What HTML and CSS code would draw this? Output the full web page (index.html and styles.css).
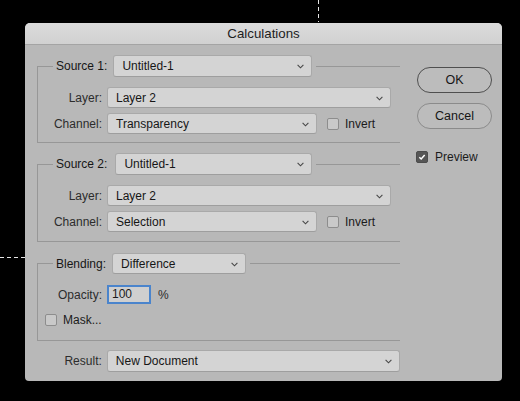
FILE: index.html
```html
<!DOCTYPE html>
<html>
<head>
<meta charset="utf-8">
<link rel="stylesheet" href="styles.css">
</head>
<body>
<div class="guide guide-v"></div>
<div class="guide guide-h"></div>
<div class="window">
  <div class="titlebar">Calculations</div>
  <div class="content">
    <div class="left">
      <div class="group g1">
        <div class="head">
          <span class="head-label">Source 1:</span>
          <div class="select head-select w-src1"><span>Untitled-1</span><svg class="chev" width="7" height="5" viewBox="0 0 7 5"><polyline points="0.6,0.8 3.5,3.8 6.4,0.8"/></svg></div>
        </div>
        <div class="row first">
          <span class="label">Layer:</span>
          <div class="select w-layer"><span>Layer 2</span><svg class="chev" width="7" height="5" viewBox="0 0 7 5"><polyline points="0.6,0.8 3.5,3.8 6.4,0.8"/></svg></div>
        </div>
        <div class="row">
          <span class="label">Channel:</span>
          <div class="select w-channel"><span>Transparency</span><svg class="chev" width="7" height="5" viewBox="0 0 7 5"><polyline points="0.6,0.8 3.5,3.8 6.4,0.8"/></svg></div>
          <span class="check"></span><span class="check-label">Invert</span>
        </div>
      </div>
      <div class="group g2">
        <div class="head">
          <span class="head-label">Source 2:</span>
          <div class="select head-select w-src2"><span>Untitled-1</span><svg class="chev" width="7" height="5" viewBox="0 0 7 5"><polyline points="0.6,0.8 3.5,3.8 6.4,0.8"/></svg></div>
        </div>
        <div class="row first">
          <span class="label">Layer:</span>
          <div class="select w-layer"><span>Layer 2</span><svg class="chev" width="7" height="5" viewBox="0 0 7 5"><polyline points="0.6,0.8 3.5,3.8 6.4,0.8"/></svg></div>
        </div>
        <div class="row">
          <span class="label">Channel:</span>
          <div class="select w-channel"><span>Selection</span><svg class="chev" width="7" height="5" viewBox="0 0 7 5"><polyline points="0.6,0.8 3.5,3.8 6.4,0.8"/></svg></div>
          <span class="check"></span><span class="check-label">Invert</span>
        </div>
      </div>
      <div class="group g3">
        <div class="head">
          <span class="head-label">Blending:</span>
          <div class="select head-select w-blend"><span>Difference</span><svg class="chev" width="7" height="5" viewBox="0 0 7 5"><polyline points="0.6,0.8 3.5,3.8 6.4,0.8"/></svg></div>
        </div>
        <div class="row opacity-row">
          <span class="label">Opacity:</span>
          <div class="input">100</div>
          <span class="pct">%</span>
        </div>
        <div class="mask-row">
          <span class="check"></span><span class="check-label">Mask...</span>
        </div>
      </div>
      <div class="row result-row">
        <span class="label">Result:</span>
        <div class="select w-result"><span>New Document</span><svg class="chev" width="7" height="5" viewBox="0 0 7 5"><polyline points="0.6,0.8 3.5,3.8 6.4,0.8"/></svg></div>
      </div>
    </div>
    <div class="right">
      <div class="btn btn-default">OK</div>
      <div class="btn btn-cancel">Cancel</div>
      <div class="preview">
        <span class="check checked"><svg width="12" height="12" viewBox="0 0 12 12"><polyline points="2.8,6.2 5,8.4 9.2,3.6"/></svg></span>
        <span class="check-label">Preview</span>
      </div>
    </div>
  </div>
</div>
</body>
</html>
```

FILE: styles.css
```css
html, body {
  margin: 0;
}
body {
  position: relative;
  width: 520px;
  height: 401px;
  overflow: hidden;
  background: #000;
  box-sizing: border-box;
  padding: 23px 0 0 25px;
  font-family: "Liberation Sans", Arial, sans-serif;
  font-size: 12px;
  color: #1b1b1b;
}

.guide {
  position: absolute;
}
.guide-v {
  left: 318px;
  top: 0;
  width: 1px;
  height: 22px;
  background: repeating-linear-gradient(to bottom, #e6e6e6 0 4px, transparent 4px 7px);
}
.guide-h {
  left: 0;
  top: 257px;
  width: 25px;
  height: 1px;
  background: repeating-linear-gradient(to right, #e6e6e6 0 4px, transparent 4px 7px);
}

.window {
  width: 477px;
  height: 358px;
  background: #b8b8b8;
  border-radius: 5px 5px 4px 4px;
  overflow: hidden;
  display: flex;
  flex-direction: column;
}
.titlebar {
  height: 21px;
  line-height: 22px;
  border-bottom: 1px solid #a4a4a4;
  background: linear-gradient(#dbdbdb, #d1d1d1);
  text-align: center;
  font-size: 13.3px;
  color: #1e1e1e;
}
.content {
  display: flex;
  padding: 0 10px 0 12px;
}
.left {
  width: 363px;
  display: flex;
  flex-direction: column;
}

.group {
  margin-top: 21px;
  border-left: 1px solid #979797;
  border-bottom: 1px solid #979797;
  padding-bottom: 8px;
}
.g2 {
  margin-top: 21px;
  padding-bottom: 9px;
}
.g3 {
  margin-top: 21px;
  padding-bottom: 14px;
}
.head {
  display: flex;
  align-items: center;
  height: 22px;
  margin-top: -11px;
  margin-left: -1px;
}
.g3 .head {
  height: 21px;
  margin-top: -10px;
}
.head::before {
  content: "";
  width: 16px;
  height: 1px;
  background: #979797;
}
.head::after {
  content: "";
  flex: 1;
  height: 1px;
  margin-left: 4px;
  background: #979797;
}
.head-label {
  margin-left: 3px;
  margin-right: 6px;
  color: #161616;
}

.select {
  box-sizing: border-box;
  display: flex;
  align-items: center;
  justify-content: space-between;
  height: 21px;
  padding: 0 7px 0 8px;
  background: #d4d4d4;
  border: 1px solid #a9a9a9;
  border-bottom-color: #9e9e9e;
  border-radius: 3px;
  color: #161616;
}
.head-select {
  height: 22px;
}
.g3 .head-select {
  height: 21px;
}
.chev {
  flex: none;
  margin-top: 1px;
}
.chev polyline {
  fill: none;
  stroke: #474747;
  stroke-width: 1.1;
}
.w-src1 { width: 199px; }
.w-src2 { width: 197px; margin-left: 2px; }
.w-blend { width: 134px; }
.w-layer { width: 284px; }
.w-channel { width: 210px; }
.w-result { width: 294px; height: 22px; }

.row {
  display: flex;
  align-items: center;
  margin-top: 5px;
}
.row.first {
  margin-top: 10px;
}
.label {
  width: 64px;
  margin-right: 5px;
  text-align: right;
  color: #2c2c2c;
}

.check {
  box-sizing: border-box;
  display: inline-flex;
  align-items: center;
  justify-content: center;
  width: 12px;
  height: 12px;
  border: 1px solid #8d8d8d;
  border-radius: 2px;
  background: #c9c9c9;
  flex: none;
}
.row .check {
  margin-left: 10px;
}
.check-label {
  margin-left: 6px;
}
.check.checked {
  background: #565656;
  border-color: #4c4c4c;
}
.check.checked svg polyline {
  fill: none;
  stroke: #fff;
  stroke-width: 1.8;
}

.opacity-row {
  margin-top: 11px;
}
.input {
  box-sizing: border-box;
  width: 44px;
  height: 19px;
  line-height: 15px;
  padding-left: 3px;
  background: #cfcfcf;
  border: 2px solid #4a84cc;
}
.pct {
  margin-left: 7px;
  color: #2c2c2c;
}
.mask-row {
  display: flex;
  align-items: center;
  height: 12px;
  line-height: 12px;
  margin-top: 10px;
  margin-left: 7px;
}

.result-row {
  margin-top: 9px;
}
.result-row .label {
  margin-left: 1px;
}

.right {
  margin-left: 17px;
  width: 75px;
  padding-top: 22px;
  display: flex;
  flex-direction: column;
}
.btn {
  box-sizing: border-box;
  height: 26px;
  line-height: 24px;
  text-align: center;
  border-radius: 13px;
  font-size: 12.5px;
  color: #161616;
  background: #bcbcbc;
}
.btn-default {
  border: 1px solid #4f4f4f;
}
.btn-cancel {
  margin-top: 10px;
  border: 1px solid #8b8b8b;
}
.preview {
  display: flex;
  align-items: center;
  height: 12px;
  margin-top: 22px;
  margin-left: -1px;
}
.preview .check-label {
  margin-left: 7px;
}
```
